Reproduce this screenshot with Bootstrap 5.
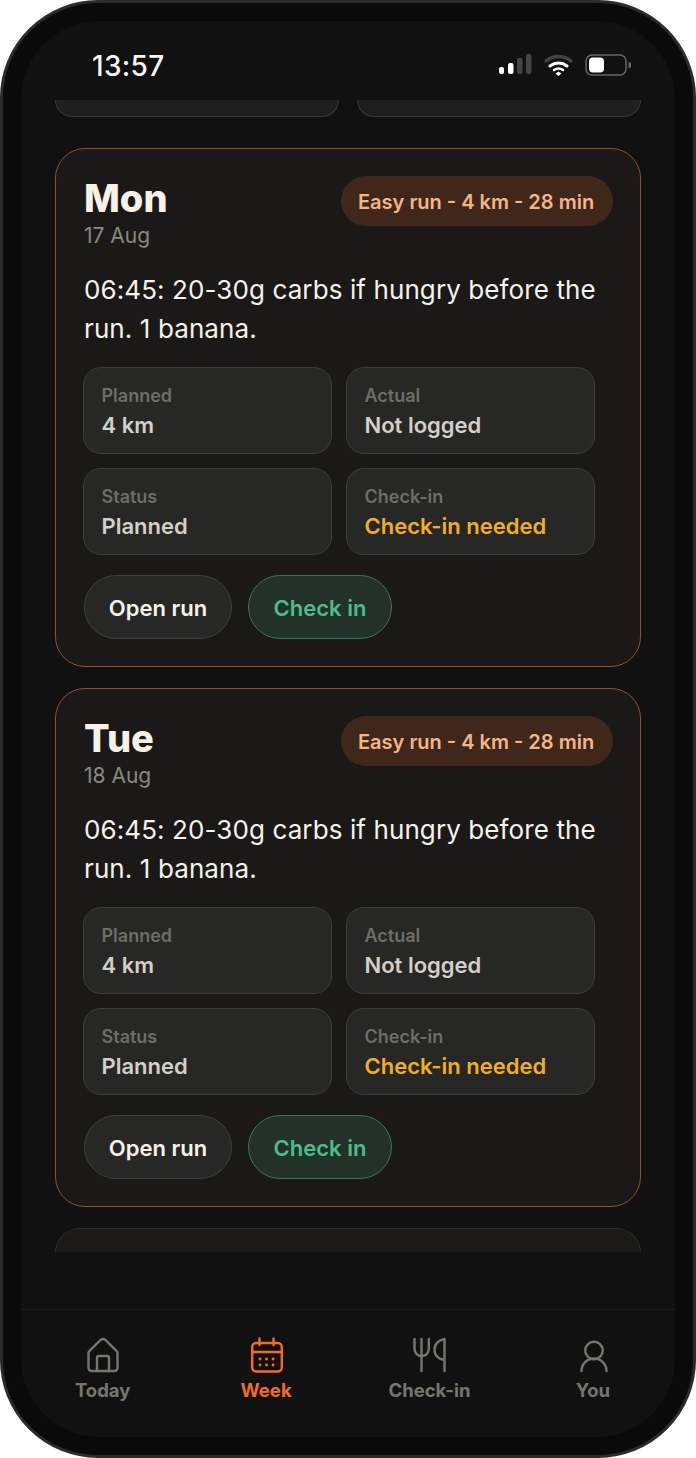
<!DOCTYPE html>
<html lang="en">
  <head>
    <meta charset="UTF-8" />
    <title>Week</title>
    <link rel="stylesheet" href="https://cdn.jsdelivr.net/npm/bootstrap@5.3.0/dist/css/bootstrap.min.css" />
    <style>
      html, body { margin: 0; background: #fff; font-family: Inter, "Liberation Sans", sans-serif; }
      .phone { width: 696px; height: 1458px; border: 3px solid #2b2b2b; border-radius: 98px; background: #0a0a0a; padding: 18px; overflow: hidden; }
      .screen { height: 100%; background: #111; border-radius: 78px; overflow: hidden; }
      .status-row { height: 79px; padding: 10px 44px 0 71px; }
      .clock { font-size: 28px; font-weight: 500; color: #f7f5f0; letter-spacing: .3px; }
      .scroller { height: 1152px; padding: 0 34px; overflow: hidden; }
      .stub { height: 17px; flex: 1; background: #1e1e1e; border: 1px solid #3a3a38; border-top: 0; border-radius: 0 0 28px 28px; }
      .stub-row { gap: 18px; margin-bottom: 31px; }
      .day-card { height: 519px; background: #1a1918; border: 1.5px solid #8f5230; border-radius: 30px; padding: 27px; margin-bottom: 21px; }
      .day-name { font-size: 38px; font-weight: 800; line-height: 44px; color: #f7f2e8; margin-left: 1px; }
      .day-date { font-size: 21px; line-height: 26px; color: #8a8880; margin: 3px 0 0 1px; }
      .run-pill { height: 50px; padding: 2px 18px 0 17px; border-radius: 25px; background: #3f271a; color: #f5b587; font-size: 20px; font-weight: 600; min-width: 272px; }
      .meal-text { font-size: 26px; line-height: 39px; letter-spacing: .1px; color: #f5f2ea; margin: 21px 0 19px 1px; }
      .stat-grid { display: grid; grid-template-columns: 249px 249px; gap: 13.500px 14px; }
      .stat-box { height: 87px; background: #272726; border: 1.5px solid #3d3d3a; border-radius: 18px; padding: 16px 17px 0 17.500px; }
      .stat-label { font-size: 18px; font-weight: 600; line-height: 24px; color: #6f6d67; }
      .stat-value { font-size: 22px; font-weight: 600; line-height: 30px; margin-top: 2px; color: #d3d0c8; }
      .stat-value.warn { color: #f0ae28; }
      .action-row { gap: 16px; margin: 20.500px 0 0 1px; }
      .action-btn { height: 64px; border-radius: 32px; border: 1.5px solid #3f3f3c; background: #272725; color: #f5f2ea; font-size: 22px; font-weight: 600; padding: 2px 0 0; }
      .action-btn.open-btn { width: 148px; }
      .action-btn.check-btn { width: 144px; background: #233229; border-color: #3a7458; color: #4cbd8a; }
      .day-card.stub-card { height: 25px; border-color: #2e2d2a; border-bottom: 0; border-radius: 30px 30px 0 0; background: #1b1a18; margin: 0; padding: 0; }
      .tabbar { height: 128px; margin-top: 57px; border-top: 1px solid #1e1e1e; display: grid; grid-template-columns: repeat(4, 163.4px); }
      .tab-item { padding-top: 26px; color: #77756e; font-size: 18.500px; font-weight: 700; line-height: 24px; text-align: center; }
      .tab-item svg { display: block; margin: 0 auto 4px; width: 38px; height: 38px; fill: none; stroke: currentColor; stroke-width: 2.400; stroke-linecap: round; stroke-linejoin: round; }
      .tab-item.active { color: #f26c21; }
    </style>
  </head>
  <body>
    <div class="phone">
      <div class="screen">
        <div class="status-row d-flex align-items-center justify-content-between">
          <span class="clock">13:57</span>
          <svg width="132" height="24" viewBox="0 0 132 24">
            <rect x="0" y="13" width="5" height="7" rx="2" fill="#fff"/>
            <rect x="9" y="9" width="5.500" height="11" rx="2" fill="#fff"/>
            <rect x="18" y="4" width="5.500" height="16" rx="2" fill="#444"/>
            <rect x="27" y="0" width="5.500" height="20" rx="2" fill="#444"/>
            <path d="M47 7a20 20 0 0 1 25 0" fill="none" stroke="#444" stroke-width="3.500" stroke-linecap="round"/>
            <path d="M51 12a14 14 0 0 1 17 0" fill="none" stroke="#fff" stroke-width="3" stroke-linecap="round"/>
            <path d="M55 16a8 8 0 0 1 9 0" fill="none" stroke="#fff" stroke-width="2.500" stroke-linecap="round"/>
            <path d="M56.500 19.500l3-2 3 2-3 2.500z" fill="#fff"/>
            <rect x="87" y="1" width="40" height="20" rx="6" fill="none" stroke="#666" stroke-width="1.500"/>
            <rect x="90" y="3.500" width="15" height="15" rx="4" fill="#fff"/>
            <path d="M129.500 8v6a3 3 0 0 0 0-6z" fill="#666"/>
          </svg>
        </div>

        <div class="scroller">
          <div class="d-flex stub-row">
            <div class="stub"></div>
            <div class="stub"></div>
          </div>

          <div class="day-card">
            <div class="d-flex justify-content-between align-items-start">
              <div>
                <div class="day-name">Mon</div>
                <div class="day-date">17 Aug</div>
              </div>
              <div class="run-pill d-flex align-items-center">Easy run - 4 km - 28 min</div>
            </div>
            <p class="meal-text">06:45: 20-30g carbs if hungry before the run. 1 banana.</p>
            <div class="stat-grid">
              <div class="stat-box"><div class="stat-label">Planned</div><div class="stat-value">4 km</div></div>
              <div class="stat-box"><div class="stat-label">Actual</div><div class="stat-value">Not logged</div></div>
              <div class="stat-box"><div class="stat-label">Status</div><div class="stat-value">Planned</div></div>
              <div class="stat-box"><div class="stat-label">Check-in</div><div class="stat-value warn">Check-in needed</div></div>
            </div>
            <div class="d-flex action-row">
              <button class="btn action-btn open-btn">Open run</button>
              <button class="btn action-btn check-btn">Check in</button>
            </div>
          </div>

          <div class="day-card">
            <div class="d-flex justify-content-between align-items-start">
              <div>
                <div class="day-name">Tue</div>
                <div class="day-date">18 Aug</div>
              </div>
              <div class="run-pill d-flex align-items-center">Easy run - 4 km - 28 min</div>
            </div>
            <p class="meal-text">06:45: 20-30g carbs if hungry before the run. 1 banana.</p>
            <div class="stat-grid">
              <div class="stat-box"><div class="stat-label">Planned</div><div class="stat-value">4 km</div></div>
              <div class="stat-box"><div class="stat-label">Actual</div><div class="stat-value">Not logged</div></div>
              <div class="stat-box"><div class="stat-label">Status</div><div class="stat-value">Planned</div></div>
              <div class="stat-box"><div class="stat-label">Check-in</div><div class="stat-value warn">Check-in needed</div></div>
            </div>
            <div class="d-flex action-row">
              <button class="btn action-btn open-btn">Open run</button>
              <button class="btn action-btn check-btn">Check in</button>
            </div>
          </div>

          <div class="day-card stub-card"></div>
        </div>

        <div class="tabbar">
          <div class="tab-item">
            <svg viewBox="0 0 38 38"><path d="M4.500 17a3 3 0 0 1 1-2.200L16.500 4a3.500 3.500 0 0 1 5 0L32.500 14.800a3 3 0 0 1 1 2.200V32a3 3 0 0 1-3 3H7.500a3 3 0 0 1-3-3z"/><path d="M13 35V22a2 2 0 0 1 2-2h8a2 2 0 0 1 2 2v13"/></svg>
            Today
          </div>
          <div class="tab-item active">
            <svg viewBox="0 0 38 38"><rect x="5.200" y="7" width="29.600" height="28.500" rx="4"/><path d="M5.200 16h29.600M12.500 2.500V9M26.500 2.500V9"/><path d="M13 23h.1M19.500 23h.1M26 23h.1M13 29h.1M19.500 29h.1M26 29h.1" stroke-width="2.800"/></svg>
            Week
          </div>
          <div class="tab-item">
            <svg viewBox="0 0 38 38"><path d="M4.500 3v10a7 7 0 0 0 14.300 0V3M11.500 3v32M34.500 3v32M34.500 3c-6 1-10 5-10 11s4 9 10 10"/></svg>
            Check-in
          </div>
          <div class="tab-item">
            <svg viewBox="0 0 38 38"><circle cx="20" cy="14.500" r="8.800"/><path d="M7.500 35a12.500 12.500 0 0 1 25 0"/></svg>
            You
          </div>
        </div>
      </div>
    </div>
    <script src="https://cdn.jsdelivr.net/npm/bootstrap@5.3.0/dist/js/bootstrap.bundle.min.js"></script>
  </body>
</html>
